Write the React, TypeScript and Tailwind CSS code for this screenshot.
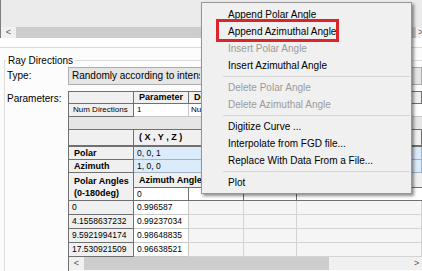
import React from "react";

type MenuEntry = { label: string; disabled?: boolean } | "sep";

const menuItems: MenuEntry[] = [
  { label: "Append Polar Angle" },
  { label: "Append Azimuthal Angle" },
  { label: "Insert Polar Angle", disabled: true },
  { label: "Insert Azimuthal Angle" },
  "sep",
  { label: "Delete Polar Angle", disabled: true },
  { label: "Delete Azimuthal Angle", disabled: true },
  "sep",
  { label: "Digitize Curve ..." },
  { label: "Interpolate from FGD file..." },
  { label: "Replace With Data From a File..." },
  "sep",
  { label: "Plot" },
];

// polar angle / first azimuth value
const dataRows = [
  ["0", "0.996587"],
  ["4.1558637232", "0.99237034"],
  ["9.5921994174", "0.98648835"],
  ["17.530921509", "0.96638521"],
];

function ContextMenu() {
  return (
    <div className="absolute left-[201px] top-[2px] w-[211px] h-[192px] bg-[#f0f0f0] border border-[#979797] shadow-[2px_2px_3px_rgba(0,0,0,0.45)] pt-[3px] pb-[2px]">
      {menuItems.map((it, i) =>
        it === "sep" ? (
          <div key={i} className="h-[5px] flex items-center pl-[21px] pr-[1px]">
            <div className="w-full h-px bg-[#d7d7d7]" />
          </div>
        ) : (
          <div
            key={i}
            className={
              "h-[17px] flex items-center pl-[26px] text-[10px] leading-none whitespace-nowrap " +
              (it.disabled ? "text-[#9b9b9b]" : "text-black")
            }
          >
            {it.label}
          </div>
        )
      )}
    </div>
  );
}

function HScroll({ thumb }: { thumb: number }) {
  return (
    <div className="flex h-full bg-[#f0f0f0] text-[9px] leading-none text-[#555]">
      <div className="w-[15px] flex items-center justify-center">&lt;</div>
      <div className="bg-[#cdcdcd] h-full" style={{ width: thumb }} />
      <div className="flex-1" />
      <div className="w-[10px] flex items-center pl-[2px]">&gt;</div>
    </div>
  );
}

export default function App() {
  const cell = "border-r border-b border-[#707070] bg-[#f0f0f0] flex items-center";
  const head = cell + " pl-[5px] font-bold text-[9px] leading-none whitespace-nowrap overflow-hidden";
  const light = "border-r border-b border-[#d4d4d4] bg-[#f5f5f5]";

  return (
    <div className="relative w-[422px] h-[271px] overflow-hidden bg-white text-black font-['Liberation_Sans',Arial,sans-serif]">
      {/* upper panel */}
      <div className="flex h-[48px] border-b border-[#d9d9d9]">
        <div className="w-[68px] bg-white" />
        <div className="flex-1 flex flex-col">
          <div className="flex flex-col h-[38px] border-l border-[#7d7d7d]">
            <div className="h-[27px] bg-[#ebebeb]" />
            <div className="h-[11px]">
              <HScroll thumb={400} />
            </div>
          </div>
          <div className="flex-1 bg-white" />
        </div>
      </div>

      {/* Ray Directions group */}
      <div className="pl-[4px] bg-[#fcfcfc] h-[223px]">
        <div className="pt-[6px]" />
        <div className="flex h-[13px] text-[10px] leading-none">
          <div className="w-[2px] mt-[6px] border-t border-l border-[#dcdcdc]" />
          <div className="px-[2px] flex items-center">Ray Directions</div>
          <div className="flex-1 mt-[6px] border-t border-[#dcdcdc]" />
        </div>
        <div className="border-l border-[#dcdcdc] flex flex-col h-[204px]">
          <div className="flex h-[18px]">
            <div className="w-[63px] pl-[2px] flex items-center text-[10px] leading-none">Type:</div>
            <div className="flex-1 border border-[#adadad] bg-[#e5e5e5] flex items-center pl-[3px] text-[10px] leading-none">
              <span className="w-[128px] overflow-hidden whitespace-nowrap">Randomly according to intensity</span>
            </div>
          </div>

          <div className="flex mt-[6px] flex-1">
            <div className="w-[63px] pl-[2px] pt-[3px] text-[10px] leading-none">Parameters:</div>

            <div className="flex-1 flex flex-col border-l border-t border-[#707070] min-w-0">
              {/* parameter list */}
              <div className="flex h-[12px]">
                <div className={head + " w-[65px]"} />
                <div className={head + " w-[55px]"}>Parameter</div>
                <div className={head + " flex-1 pl-[2px]"}>
                  <span className="w-[10px] overflow-hidden">Description</span>
                </div>
              </div>
              <div className="flex h-[13px] text-[8px] leading-none">
                <div className={cell + " w-[65px] pl-[4px] whitespace-nowrap"}>Num Directions</div>
                <div className="w-[55px] border-r border-b border-[#c8c8c8] bg-white flex items-center pl-[3px]">1</div>
                <div className="flex-1 border-b border-[#c8c8c8] bg-white flex items-center pl-[2px] whitespace-nowrap">
                  <span className="w-[10px] overflow-hidden">Number of directions</span>
                </div>
              </div>
              <div className="h-[13px] bg-[#e6e6e6] border-b border-[#707070]" />

              {/* axis vectors */}
              <div className="flex h-[17px]">
                <div className={head + " w-[65px] border-b-2"} />
                <div className={head + " flex-1 border-b-2"}>( X , Y , Z )</div>
              </div>
              <div className="flex h-[13px]">
                <div className={head + " w-[65px]"}>Polar</div>
                <div className="flex-1 border-r border-b border-[#9fb3c8] bg-[#dcebfa] flex items-center pl-[3px] text-[8.5px] leading-none">0, 0, 1</div>
              </div>
              <div className="flex h-[13px]">
                <div className={head + " w-[65px]"}>Azimuth</div>
                <div className="flex-1 border-r border-b border-[#9fb3c8] bg-[#dcebfa] flex items-center pl-[3px] text-[8.5px] leading-none">1, 0, 0</div>
              </div>

              {/* angle grid */}
              <div className="flex h-[28px]">
                <div className="w-[65px] border-r border-b border-[#707070] bg-[#f0f0f0] pl-[5px] pt-[2px] font-bold text-[9px] leading-[12px] whitespace-nowrap">
                  <div>Polar Angles</div>
                  <div>(0-180deg)</div>
                </div>
                <div className="flex-1 flex flex-col">
                  <div className="h-[15px] bg-[#f0f0f0] border-b border-[#707070] flex items-center pl-[5px] font-bold text-[9px] leading-none whitespace-nowrap">
                    Azimuth Angles
                  </div>
                  <div className="flex flex-1">
                    <div className="w-[55px] border-r border-b border-[#707070] bg-white flex items-center pl-[3px] text-[8.5px] leading-none">0</div>
                    <div className="w-[55px] border-r border-b border-[#707070] bg-white" />
                    <div className="w-[53px] border-r border-b border-[#707070] bg-white" />
                    <div className="flex-1 border-b border-[#707070] bg-white" />
                  </div>
                </div>
              </div>
              {dataRows.map((r) => (
                <div key={r[0]} className="flex h-[14px] text-[8.5px] leading-none">
                  <div className={cell + " w-[65px] pl-[3px]"}>{r[0]}</div>
                  <div className="w-[55px] border-r border-b border-[#c8c8c8] bg-white flex items-center pl-[3px]">{r[1]}</div>
                  <div className={light + " w-[55px]"} />
                  <div className={light + " w-[53px]"} />
                  <div className={light + " flex-1"} />
                </div>
              ))}
              <div className="h-[13px]">
                <HScroll thumb={245} />
              </div>
            </div>
          </div>
        </div>
      </div>

      <ContextMenu />
      {/* red highlight around the chosen item */}
      <div className="absolute left-[216px] top-[19px] w-[123px] h-[23px] border-[3px] border-[#d9252b]" />
    </div>
  );
}
